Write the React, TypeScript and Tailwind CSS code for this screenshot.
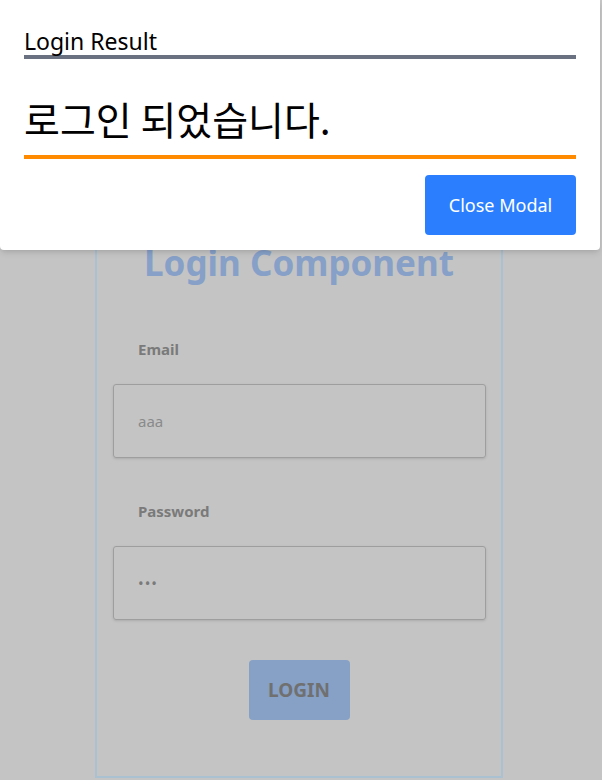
import React from 'react';

const font = { fontFamily: '"Noto Sans", "Noto Sans CJK KR", sans-serif' };

export default function App() {
  return (
    <div className="relative h-[780px] overflow-hidden bg-[#c4c4c4]" style={font}>
      {/* Login form, dimmed behind the modal */}
      <div className="mt-[208px] ml-[95px] flex w-[408px] flex-col border-2 border-[#a9c1d1] pt-[33px] pb-[56px]">
        <h1 className="text-center text-[35px] leading-[40px] font-bold text-[#86a0c8]">Login Component</h1>

        <label className="mt-[56px] ml-[41px] text-[15px] leading-[20px] font-bold text-[#7a7a7a]">Email</label>
        <div className="mt-[25px] mr-[15px] ml-[16px] flex h-[74px] items-center rounded-[3px] border border-[#9e9e9e] pl-[24px] text-[15px] text-[#8a8a8a] shadow-sm">
          aaa
        </div>

        <label className="mt-[43px] ml-[41px] text-[15px] leading-[20px] font-bold text-[#7a7a7a]">Password</label>
        <div className="mt-[25px] mr-[15px] ml-[16px] flex h-[74px] items-center rounded-[3px] border border-[#9e9e9e] pl-[24px] text-[15px] tracking-[1px] text-[#7a7a7a] shadow-sm">
          •••
        </div>

        <div className="mt-[40px] flex justify-center">
          <button className="h-[60px] w-[101px] rounded-[4px] bg-[#86a0c6] text-[19px] font-bold text-[#707070]">LOGIN</button>
        </div>
      </div>

      {/* Modal */}
      <div className="absolute top-0 left-0 flex h-[250px] w-[600px] flex-col rounded-b-[4px] bg-white px-6 pt-[27px] shadow-md">
        <h2 className="border-b-4 border-[#6a7282] text-[23px] leading-[28px] text-black">Login Result</h2>
        <p className="mt-[34px] border-b-4 border-[#ff8a00] pb-[12px] text-[39px] leading-[50px] text-black" style={{ fontFamily: '"Noto Sans CJK KR", sans-serif' }}>
          로그인 되었습니다.
        </p>
        <div className="mt-[16px] flex justify-end">
          <button className="h-[60px] w-[151px] rounded-[4px] bg-[#2b7fff] text-[18px] text-white">Close Modal</button>
        </div>
      </div>
    </div>
  );
}
